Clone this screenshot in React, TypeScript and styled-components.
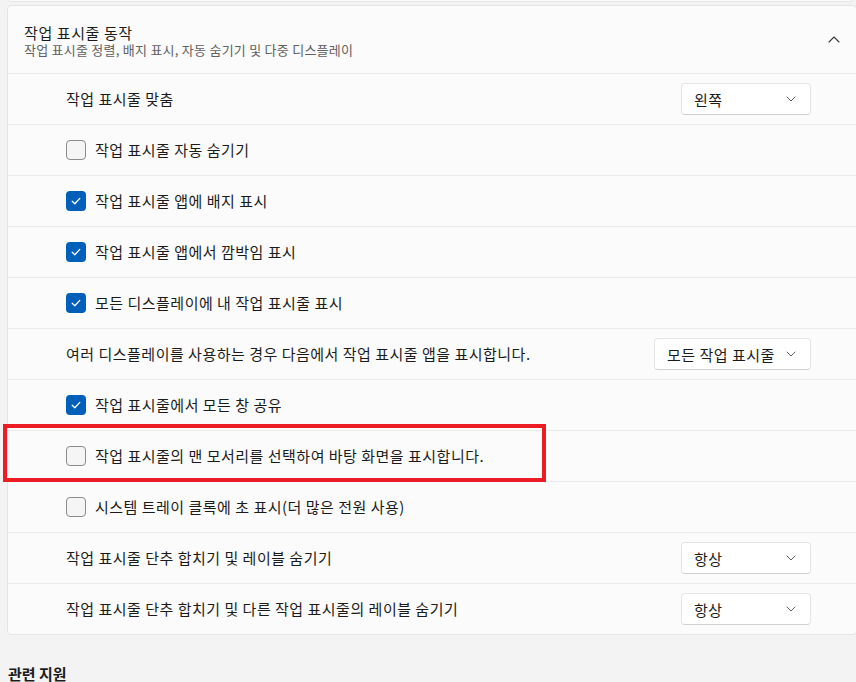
import React from "react";
import styled, { createGlobalStyle } from "styled-components";

const Global = createGlobalStyle`
  html, body { margin: 0; padding: 0; background: #f3f3f3; }
  body { font-family: "Noto Sans CJK KR", "Noto Sans", sans-serif; color: #1b1b1b; overflow: hidden; }
`;

const Page = styled.div`
  position: relative;
  width: 856px;
  height: 682px;
  overflow: hidden;
`;

const PrevCard = styled.div`
  margin: 0 3px 0 8px;
  height: 2px;
  background: #fbfbfb;
  border: 1px solid #e5e5e5;
  border-top: none;
  border-radius: 0 0 4px 4px;
  position: relative;
  top: -1px;
`;

const Card = styled.section`
  margin: 2px 0 0 7px;
  width: 848px;
  background: #fbfbfb;
  border: 1px solid #e5e5e5;
  border-radius: 4px;
`;

const Header = styled.div`
  height: 67px;
  display: flex;
  align-items: center;
  padding: 0 16px 0 16px;
  border-bottom: 1px solid #eaeaea;
`;

const HeaderText = styled.div`
  flex: 1;
  display: flex;
  flex-direction: column;
  padding-top: 1px;
`;

const Title = styled.div`
  font-size: 15px;
  letter-spacing: 0.6px;
  line-height: 18px;
  color: #1b1b1b;
`;

const Subtitle = styled.div`
  font-size: 13px;
  letter-spacing: 0.25px;
  line-height: 15px;
  color: #616161;
`;

const Row = styled.div<{ $last?: boolean }>`
  height: 50px;
  display: flex;
  align-items: center;
  padding: 0 45px 0 58px;
  border-bottom: ${(p) => (p.$last ? "none" : "1px solid #eaeaea")};
`;

const Label = styled.div`
  flex: 1;
  font-size: 15px;
  letter-spacing: 0.5px;
  line-height: 18px;
  padding-bottom: 1px;
  color: #1b1b1b;
`;

const Box = styled.div<{ $checked?: boolean }>`
  width: 20px;
  height: 20px;
  box-sizing: border-box;
  border-radius: 4px;
  margin-right: 9px;
  display: flex;
  align-items: center;
  justify-content: center;
  background: ${(p) => (p.$checked ? "#005fb8" : "#f5f5f5")};
  border: ${(p) => (p.$checked ? "none" : "1px solid #8b8b8b")};
`;

const Select = styled.div<{ $w: number }>`
  width: ${(p) => p.$w}px;
  height: 32px;
  box-sizing: border-box;
  background: #ffffff;
  border: 1px solid #e5e5e5;
  border-bottom-color: #d0d0d0;
  border-radius: 4px;
  display: flex;
  align-items: center;
  padding: 0 14px 0 12px;
  font-size: 15px;
  letter-spacing: 0.5px;
`;

const SelectText = styled.span`
  flex: 1;
`;

const Related = styled.div`
  margin: 28px 0 0 8px;
  font-size: 15px;
  font-weight: 700;
  color: #1b1b1b;
`;

const Highlight = styled.div`
  position: absolute;
  left: 3px;
  top: 424px;
  width: 543px;
  height: 58px;
  box-sizing: border-box;
  border: 4px solid #ec1c24;
  pointer-events: none;
`;

const Check = () => (
  <svg width="12" height="12" viewBox="0 0 12 12">
    <path d="M2.2 6.3 L4.8 8.8 L9.8 3.4" fill="none" stroke="#fff" strokeWidth="1.3" strokeLinecap="round" strokeLinejoin="round" />
  </svg>
);

const ChevronDown = () => (
  <svg width="10" height="6" viewBox="0 0 10 6">
    <path d="M1 1 L5 5 L9 1" fill="none" stroke="#5f5f5f" strokeWidth="1" strokeLinecap="round" strokeLinejoin="round" />
  </svg>
);

const ChevronUp = () => (
  <svg width="12" height="7" viewBox="0 0 12 7">
    <path d="M1 6 L6 1 L11 6" fill="none" stroke="#3a3a3a" strokeWidth="1.1" strokeLinecap="round" strokeLinejoin="round" />
  </svg>
);

type Item =
  | { kind: "select"; label: string; value: string; w: number }
  | { kind: "check"; label: string; checked: boolean };

const items: Item[] = [
  { kind: "select", label: "작업 표시줄 맞춤", value: "왼쪽", w: 130 },
  { kind: "check", label: "작업 표시줄 자동 숨기기", checked: false },
  { kind: "check", label: "작업 표시줄 앱에 배지 표시", checked: true },
  { kind: "check", label: "작업 표시줄 앱에서 깜박임 표시", checked: true },
  { kind: "check", label: "모든 디스플레이에 내 작업 표시줄 표시", checked: true },
  { kind: "select", label: "여러 디스플레이를 사용하는 경우 다음에서 작업 표시줄 앱을 표시합니다.", value: "모든 작업 표시줄", w: 157 },
  { kind: "check", label: "작업 표시줄에서 모든 창 공유", checked: true },
  { kind: "check", label: "작업 표시줄의 맨 모서리를 선택하여 바탕 화면을 표시합니다.", checked: false },
  { kind: "check", label: "시스템 트레이 클록에 초 표시(더 많은 전원 사용)", checked: false },
  { kind: "select", label: "작업 표시줄 단추 합치기 및 레이블 숨기기", value: "항상", w: 130 },
  { kind: "select", label: "작업 표시줄 단추 합치기 및 다른 작업 표시줄의 레이블 숨기기", value: "항상", w: 130 },
];

export default function App() {
  return (
    <Page>
      <Global />
      <PrevCard />
      <Card>
        <Header>
          <HeaderText>
            <Title>작업 표시줄 동작</Title>
            <Subtitle>작업 표시줄 정렬, 배지 표시, 자동 숨기기 및 다중 디스플레이</Subtitle>
          </HeaderText>
          <ChevronUp />
        </Header>
        {items.map((it, i) => (
          <Row key={i} $last={i === items.length - 1}>
            {it.kind === "check" && (
              <Box $checked={it.checked}>{it.checked && <Check />}</Box>
            )}
            <Label>{it.label}</Label>
            {it.kind === "select" && (
              <Select $w={it.w}>
                <SelectText>{it.value}</SelectText>
                <ChevronDown />
              </Select>
            )}
          </Row>
        ))}
      </Card>
      <Related>관련 지원</Related>
      <Highlight />
    </Page>
  );
}
